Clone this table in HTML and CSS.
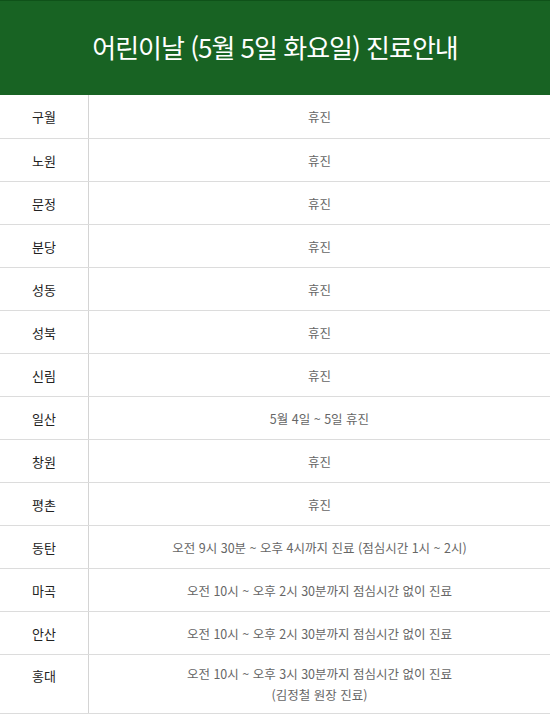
FILE: index.html
```html
<!DOCTYPE html>
<html lang="ko">
<head>
<meta charset="utf-8">
<link rel="stylesheet" href="styles.css">
</head>
<body>
<div class="page">
  <header class="head"><h1 class="title">어린이날 (5월 5일 화요일) 진료안내</h1></header>
  <div class="table">
    <div class="row"><div class="name">구월</div><div class="info">휴진</div></div>
    <div class="row"><div class="name">노원</div><div class="info">휴진</div></div>
    <div class="row"><div class="name">문정</div><div class="info">휴진</div></div>
    <div class="row"><div class="name">분당</div><div class="info">휴진</div></div>
    <div class="row"><div class="name">성동</div><div class="info">휴진</div></div>
    <div class="row"><div class="name">성북</div><div class="info">휴진</div></div>
    <div class="row"><div class="name">신림</div><div class="info">휴진</div></div>
    <div class="row"><div class="name">일산</div><div class="info">5월 4일 ~ 5일 휴진</div></div>
    <div class="row"><div class="name">창원</div><div class="info">휴진</div></div>
    <div class="row"><div class="name">평촌</div><div class="info">휴진</div></div>
    <div class="row"><div class="name">동탄</div><div class="info">오전 9시 30분 ~ 오후 4시까지 진료 (점심시간 1시 ~ 2시)</div></div>
    <div class="row"><div class="name">마곡</div><div class="info">오전 10시 ~ 오후 2시 30분까지 점심시간 없이 진료</div></div>
    <div class="row"><div class="name">안산</div><div class="info">오전 10시 ~ 오후 2시 30분까지 점심시간 없이 진료</div></div>
    <div class="row tall"><div class="name">홍대</div><div class="info">오전 10시 ~ 오후 3시 30분까지 점심시간 없이 진료<br>(김정철 원장 진료)</div></div>
  </div>
</div>
</body>
</html>
```
FILE: styles.css
```css
* { box-sizing: border-box; }
html, body { margin: 0; padding: 0; background: #fff; }
body { font-family: "Noto Sans CJK KR", "Noto Sans", sans-serif; }
.page { width: 550px; }
.head {
  height: 95px;
  background: #186323;
  border-top: 1px solid #0f5219;
  display: flex;
  align-items: center;
  justify-content: center;
}
.title {
  margin: 0;
  color: #fff;
  font-size: 26px;
  font-weight: 400;
  letter-spacing: -1px;
  line-height: 1;
  padding-bottom: 2px;
}
.row {
  display: grid;
  grid-template-columns: 89px 1fr;
  height: 43px;
  border-bottom: 1px solid #dcdcdc;
}
.row:first-child { height: 44px; }
.name {
  border-right: 1px solid #d4d4d4;
  display: flex;
  align-items: center;
  justify-content: center;
  font-size: 13px;
  color: #222;
}
.info {
  display: flex;
  align-items: center;
  justify-content: center;
  text-align: center;
  font-size: 12.5px;
  color: #666;
}
.row.tall { height: 59px; }
.row.tall .name { align-items: flex-start; padding-top: 11px; }
.row.tall .info { line-height: 21px; }
```
